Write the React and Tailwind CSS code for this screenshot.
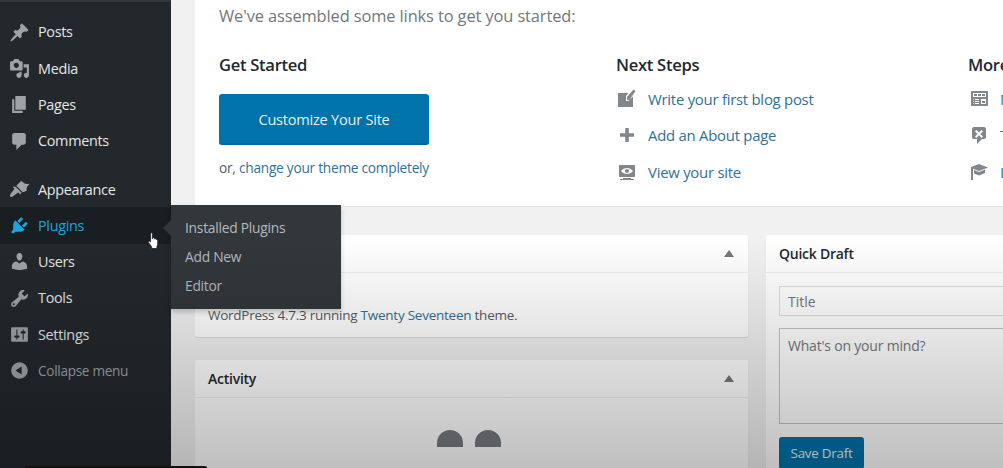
import React from 'react';

const font = '[font-family:"Open_Sans",sans-serif]';

// dashicons paths
const icons = {
  posts: 'M10.44 3.02l1.82-1.82 6.36 6.35-1.83 1.82c-1.05-.68-2.48-.57-3.41.36l-.75.75c-.92.93-1.04 2.35-.35 3.41l-1.83 1.82-2.41-2.41-2.8 2.79c-.42.42-3.38 2.71-3.8 2.29s1.86-3.39 2.28-3.81l2.79-2.79L4.1 9.36l1.83-1.82c1.05.69 2.48.57 3.4-.36l.75-.75c.93-.92 1.05-2.35.36-3.41z',
  media: 'M13 11V4c0-.55-.45-1-1-1h-1.67L9 1H5L3.67 3H2c-.55 0-1 .45-1 1v7c0 .55.45 1 1 1h10c.55 0 1-.45 1-1zM7 4.5c1.38 0 2.5 1.12 2.5 2.5S8.38 9.5 7 9.5 4.5 8.38 4.5 7 5.62 4.5 7 4.5zM14 6h5v10.5c0 1.38-1.12 2.5-2.5 2.5S14 17.88 14 16.5s1.12-2.5 2.5-2.5c.17 0 .34.02.5.05V9h-3V6zm-4 8.05V13h2v3.5c0 1.38-1.12 2.5-2.5 2.5S7 17.88 7 16.5 8.12 14 9.5 14c.17 0 .34.02.5.05z',
  pages: 'M6 15V2h10v13H6zm-1 1h8v2H3V5h2v11z',
  comments: 'M5 2h9c1.1 0 2 .9 2 2v7c0 1.1-.9 2-2 2h-2l-5 5v-5H5c-1.1 0-2-.9-2-2V4c0-1.1.9-2 2-2z',
  appearance: 'M13 12.5L7 6.5l4.5-4.5c2 .6 2.5 2.2 4.2 2.6 1.2.3 2.6.1 3.8-.4-.4 1.3-1.6 2.1-2.2 3.1-.7 1.2-.6 2.6-.3 3.8L13 12.5zM6.2 7.3l5.9 5.9-1.5 1.4-1.8-1.8-1.5 1c-1.5 1-3.4 3.2-5.3 3.3-.8 0-1.2-.4-1.1-1.1.1-1.9 2.3-3.8 3.3-5.3l1-1.5-1.8-1.8z',
  plugins: 'M13.11 4.36L9.87 7.6 8 5.73l3.24-3.24c.35-.34 1.05-.2 1.56.32.52.51.66 1.21.31 1.55zm-8 1.77l.91-1.12 9.01 9.01-1.19.84c-.71.71-2.63 1.16-3.82 1.16H6.14L4.9 17.26c-.59.59-1.54.59-2.12 0-.59-.58-.59-1.53 0-2.12l1.24-1.24v-3.88c0-1.13.4-3.19 1.09-3.89zm7.26 3.97l3.24-3.24c.34-.35 1.04-.21 1.55.31.52.51.66 1.21.31 1.55l-3.24 3.25z',
  users: 'M10 9.25c-2.27 0-2.73-3.44-2.73-3.44C7 4.02 7.82 2 9.97 2c2.16 0 2.98 2.02 2.71 3.81 0 0-.41 3.44-2.68 3.44zm0 2.57L12.72 10c2.39 0 4.52 2.33 4.52 4.53v2.49s-3.65 1.13-7.24 1.13c-3.65 0-7.24-1.13-7.24-1.13v-2.49c0-2.25 1.94-4.48 4.47-4.48z',
  tools: 'M16.68 9.77c-1.34 1.34-3.3 1.67-4.95.99l-5.41 6.52c-.99.99-2.59.99-3.58 0s-.99-2.59 0-3.57l6.52-5.42c-.68-1.65-.35-3.61.99-4.95 1.28-1.28 3.12-1.62 4.72-1.06l-2.89 2.89 2.82 2.82 2.86-2.87c.53 1.58.18 3.39-1.08 4.65zM3.81 16.21c.4.39 1.04.39 1.43 0 .4-.4.4-1.04 0-1.43-.39-.4-1.03-.4-1.43 0-.39.39-.39 1.03 0 1.43z',
  settings: 'M18 16V4c0-.55-.45-1-1-1H3c-.55 0-1 .45-1 1v12c0 .55.45 1 1 1h14c.55 0 1-.45 1-1zM8 11h1c.55 0 1 .45 1 1s-.45 1-1 1H8v1.5c0 .28-.22.5-.5.5s-.5-.22-.5-.5V13H6c-.55 0-1-.45-1-1s.45-1 1-1h1V5.5c0-.28.22-.5.5-.5s.5.22.5.5V11zm5-2h-1c-.55 0-1-.45-1-1s.45-1 1-1h1V5.5c0-.28.22-.5.5-.5s.5.22.5.5V7h1c.55 0 1 .45 1 1s-.45 1-1 1h-1v5.5c0 .28-.22.5-.5.5s-.5-.22-.5-.5V9z',
  collapse: 'M10 2.16c4.33 0 7.84 3.51 7.84 7.84s-3.51 7.84-7.84 7.84S2.16 14.33 2.16 10 5.71 2.16 10 2.16zm2 11.72V6.12L6.18 9.97z',
  write: 'M1 4h10.5L9 7v5h2.5L16 7.5V18H1zM10 11V8l6.5-7.5 2 1.5-6 9z',
  plus: 'M8.2 3h3.6v5.2H17v3.6h-5.2V17H8.2v-5.2H3V8.2h5.2z',
  view: 'M18 14V4c0-.55-.45-1-1-1H3c-.55 0-1 .45-1 1v10c0 .55.45 1 1 1h14c.55 0 1-.45 1-1zm-8-8c2.3 0 4.4 1.14 6 3-1.6 1.86-3.7 3-6 3s-4.4-1.14-6-3c1.6-1.86 3.7-3 6-3zm2 3c0-1.1-.9-2-2-2s-2 .9-2 2 .9 2 2 2 2-.9 2-2zm2 8h3v1H3v-1h3v-1h8v1z',
  widgets: 'M19 16V3c0-.55-.45-1-1-1H3c-.55 0-1 .45-1 1v13c0 .55.45 1 1 1h15c.55 0 1-.45 1-1zM4 4h13v4H4V4zm1 1v2h3V5H5zm4 0v2h3V5H9zm4 0v2h3V5h-3zm-8.5 5c.28 0 .5.22.5.5s-.22.5-.5.5-.5-.22-.5-.5.22-.5.5-.5zM6 10h4v1H6v-1zm6 0h5v5h-5v-5zm-7.5 2c.28 0 .5.22.5.5s-.22.5-.5.5-.5-.22-.5-.5.22-.5.5-.5zM6 12h4v1H6v-1zm7 0v2h3v-2h-3zm-8.5 2c.28 0 .5.22.5.5s-.22.5-.5.5-.5-.22-.5-.5.22-.5.5-.5zM6 14h4v1H6v-1z',
  nocomments: 'M5 2h10c1.1 0 2 .9 2 2v8c0 1.1-.9 2-2 2h-2l-5 5v-5H5c-1.1 0-2-.9-2-2V4c0-1.1.9-2 2-2zm2.4 2.9L6 6.3 8.6 8.9 6 11.5l1.4 1.4L10 10.3l2.6 2.6 1.4-1.4-2.6-2.6L14 6.3l-1.4-1.4L10 7.5z',
  learn: 'M10 2l9 3.5-9 3.5-6-2.3V18H2V5zM5 8l5 2 6-2.4V11l-6 2.4L5 11.6z',
};

function Icon({ name, className }) {
  return (
    <svg viewBox="0 0 20 20" className={className} fill="currentColor" aria-hidden="true">
      <path d={icons[name]} fillRule="evenodd" />
    </svg>
  );
}

const menuTop = [
  ['posts', 'Posts'],
  ['media', 'Media'],
  ['pages', 'Pages'],
  ['comments', 'Comments'],
];
const menuBottom = [
  ['appearance', 'Appearance'],
  ['plugins', 'Plugins'],
  ['users', 'Users'],
  ['tools', 'Tools'],
  ['settings', 'Settings'],
];

function MenuItem({ icon, label }) {
  const active = label === 'Plugins';
  return (
    <div className={`flex h-[36.3px] items-center pl-[9px] ${active ? 'bg-[#191e23] text-[#1fa5d8]' : 'text-[#e4e6e7]'}`}>
      <Icon name={icon} className={`h-[21px] w-[21px] ${active ? 'text-[#1fa5d8]' : 'text-[#9fa3a7]'}`} />
      <span className="ml-[8px] text-[14.4px] tracking-[-0.3px]">{label}</span>
    </div>
  );
}

function Sidebar() {
  return (
    <aside className="w-[171px] shrink-0 bg-[#23282d] pt-[14px]">
      {menuTop.map(([icon, label]) => (
        <MenuItem key={label} icon={icon} label={label} />
      ))}
      <div className="h-[12px]" />
      {menuBottom.map(([icon, label]) => (
        <MenuItem key={label} icon={icon} label={label} />
      ))}
      <div className="flex h-[36.3px] items-center pl-[9px] text-[#9fa3a7]">
        <Icon name="collapse" className="h-[21px] w-[21px]" />
        <span className="ml-[8px] text-[13.6px] tracking-[-0.3px]">Collapse menu</span>
      </div>
    </aside>
  );
}

function StepLink({ icon, label }) {
  return (
    <div className="flex h-[36.3px] items-center">
      <Icon name={icon} className="h-[20px] w-[20px] shrink-0 text-[#82878c]" />
      <span className="ml-[11px] whitespace-nowrap text-[14.9px] tracking-[-0.25px] text-[#2f7196]">{label}</span>
    </div>
  );
}

function WelcomePanel() {
  return (
    <section className="h-[207px] w-[860px] shrink-0 border-b border-[#e3e3e3] bg-white pl-[24px] pt-[5px]">
      <p className="text-[16.4px] leading-[22px] tracking-[-0.1px] text-[#72777c]">We&apos;ve assembled some links to get you started:</p>
      <div className="mt-[27px] flex">
        <div className="w-[397px] shrink-0">
          <h3 className="text-[16.6px] font-semibold leading-[22px] tracking-[-0.3px] text-[#23282d]">Get Started</h3>
          <div className="mt-[18px] flex h-[51px] w-[210px] items-center justify-center rounded-[3px] border-b-2 border-[#006799] bg-[#0073aa] pt-[2px] text-[14.6px] tracking-[-0.25px] text-[#e6f2f7]">
            Customize Your Site
          </div>
          <p className="mt-[13px] text-[13.7px] tracking-[-0.25px] text-[#555d66]">
            or, <span className="text-[#2f7196]">change your theme completely</span>
          </p>
        </div>
        <div className="w-[352px] shrink-0">
          <h3 className="text-[16.6px] font-semibold leading-[22px] tracking-[-0.3px] text-[#23282d]">Next Steps</h3>
          <div className="mt-[5px] pl-[1px]">
            <StepLink icon="write" label="Write your first blog post" />
            <StepLink icon="plus" label="Add an About page" />
            <StepLink icon="view" label="View your site" />
          </div>
        </div>
        <div className="shrink-0">
          <h3 className="whitespace-nowrap text-[16.6px] font-semibold leading-[22px] tracking-[-0.3px] text-[#23282d]">More Actions</h3>
          <div className="mt-[5px] pl-[1px]">
            <StepLink icon="widgets" label="Manage widgets or menus" />
            <StepLink icon="nocomments" label="Turn comments on or off" />
            <StepLink icon="learn" label="Learn more about getting started" />
          </div>
        </div>
      </div>
    </section>
  );
}

function BoxHeader({ title, arrow = true }) {
  return (
    <div className="flex h-[38px] items-center justify-between border-b border-[#eeeeee] pl-[13px] pr-[14px]">
      <h2 className="text-[14px] font-semibold tracking-[-0.25px] text-[#23282d]">{title}</h2>
      {arrow && <div className="h-0 w-0 border-x-[5px] border-b-[7px] border-x-transparent border-b-[#72777c]" />}
    </div>
  );
}

function Dashboard() {
  return (
    <div className="mt-[28px] flex gap-[18px]">
      <div className="w-[553px] shrink-0">
        <div className="h-[102px] rounded-[2px] bg-white shadow-[0_1px_1px_rgba(0,0,0,0.1)]">
          {/* the title of this box sits under the flyout */}
          <BoxHeader title="" />
          <p className="mt-[32px] pl-[13px] text-[13.5px] tracking-[-0.25px] text-[#555d66]">
            WordPress 4.7.3 running <span className="text-[#2f7196]">Twenty Seventeen</span> theme.
          </p>
        </div>
        <div className="mt-[23px] h-[200px] rounded-[2px] bg-white shadow-[0_1px_1px_rgba(0,0,0,0.1)]">
          <BoxHeader title="Activity" />
          <div className="flex justify-center gap-[12px] pr-[6px] pt-[32px]">
            <div className="h-[17px] w-[26px] rounded-t-full bg-[#757a80]" />
            <div className="h-[17px] w-[26px] rounded-t-full bg-[#757a80]" />
          </div>
        </div>
      </div>
      <div className="w-[400px] shrink-0">
        <div className="h-[300px] rounded-[2px] bg-white shadow-[0_1px_1px_rgba(0,0,0,0.1)]">
          <BoxHeader title="Quick Draft" arrow={false} />
          <div className="px-[13px] pt-[13px]">
            <div className="flex h-[30px] items-center border border-[#dddddd] pl-[8px] text-[14px] text-[#72777c]">Title</div>
            <div className="mt-[12px] h-[96px] border border-[#c4c4c4] pl-[8px] pt-[6px] text-[14px] tracking-[-0.2px] text-[#72777c]">What&apos;s on your mind?</div>
            <div className="mt-[13px] flex h-[32px] w-[85px] items-center justify-center rounded-[3px] bg-[#0073aa] text-[13.4px] tracking-[-0.25px] text-[#e6f2f7]">Save Draft</div>
          </div>
        </div>
      </div>
    </div>
  );
}

function Flyout() {
  return (
    <div className="absolute left-[171px] top-[205px] h-[104px] w-[170px] bg-[#32373c] pl-[14px] pt-[9px] text-[13.8px] tracking-[-0.25px] text-[#b4b9be] shadow-[0_3px_5px_rgba(0,0,0,0.2)]">
      <div className="absolute -left-[8px] top-[15px] h-0 w-0 border-y-[8px] border-r-[8px] border-y-transparent border-r-[#32373c]" />
      <div className="flex h-[29px] items-center">Installed Plugins</div>
      <div className="flex h-[29px] items-center">Add New</div>
      <div className="flex h-[29px] items-center">Editor</div>
    </div>
  );
}

function HandCursor() {
  return (
    <svg viewBox="0 0 14 18" className="absolute left-[147px] top-[232px] h-[18px] w-[14px]" aria-hidden="true">
      <path d="M3.5 1.5c0-1 1.8-1 1.8 0V7l.4-1.2c.6-.4 1.4-.3 1.6.4l.1 1 .3-.6c.6-.4 1.3-.2 1.5.4v.7c.5-.4 1.3-.2 1.5.5v4c0 1-.4 1.6-.8 2.3v2H4.7v-1.5L1.5 10.5c-.6-.9.5-1.9 1.2-1.2l.8.8z" fill="#fff" stroke="#222" strokeWidth="0.8" />
    </svg>
  );
}

export default function App() {
  return (
    <div className={`relative flex h-[468px] w-[1003px] overflow-hidden bg-[#f1f1f1] ${font}`}>
      <Sidebar />
      <main className="min-w-0 flex-1 pl-[24px]">
        <WelcomePanel />
        <Dashboard />
      </main>
      <Flyout />
      <HandCursor />
      {/* video player shade along the bottom of the frame */}
      <div className="pointer-events-none absolute inset-x-0 bottom-0 h-[230px] bg-gradient-to-b from-transparent to-black/25" />
      <div className="absolute bottom-0 left-[25px] h-[2px] w-[182px] rounded-t-[2px] bg-[#111111]" />
      <div className="absolute left-0 top-0 h-[2px] w-[171px] bg-[#32373c]" />
    </div>
  );
}
